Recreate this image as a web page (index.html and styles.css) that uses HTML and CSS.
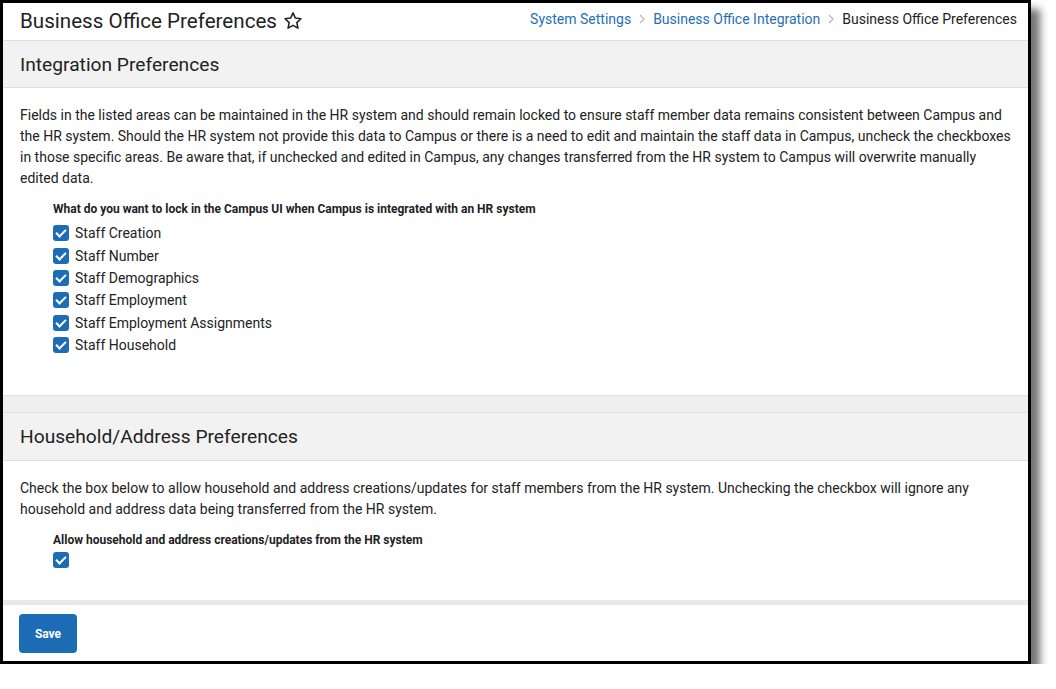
FILE: index.html
```html
<!DOCTYPE html>
<html>
  <head>
	<title>Business Office Preferences</title>
	<meta charset="UTF-8">
	<link rel="stylesheet" href="styles.css">
  </head>
  <body>
	<div class="frame">
		<div class="topbar">
			<h1 class="page-title">Business Office Preferences
				<svg class="star" viewBox="0 0 24 24" width="22" height="22"><path d="M12 3.2l2.6 5.6 6.1.7-4.5 4.2 1.2 6.1L12 16.8l-5.4 3 1.2-6.1-4.5-4.2 6.1-.7z" fill="none" stroke="#222" stroke-width="1.7" stroke-linejoin="round"/></svg>
			</h1>
			<div class="crumbs">
				<a href="#">System Settings</a>
				<svg class="sep" viewBox="0 0 8 12" width="8" height="12"><path d="M2 2l4 4-4 4" fill="none" stroke="#b8b8b8" stroke-width="1.3"/></svg>
				<a href="#">Business Office Integration</a>
				<svg class="sep" viewBox="0 0 8 12" width="8" height="12"><path d="M2 2l4 4-4 4" fill="none" stroke="#b8b8b8" stroke-width="1.3"/></svg>
				<span class="current">Business Office Preferences</span>
			</div>
		</div>

		<div class="main">
			<div class="card card-first">
				<div class="card-head">Integration Preferences</div>
				<div class="card-body">
					<p>Fields in the listed areas can be maintained in the HR system and should remain locked to ensure staff member data remains consistent between Campus and the HR system. Should the HR system not provide this data to Campus or there is a need to edit and maintain the staff data in Campus, uncheck the checkboxes in those specific areas. Be aware that, if unchecked and edited in Campus, any changes transferred from the HR system to Campus will overwrite manually edited data.</p>
					<div class="field">
						<div class="field-label">What do you want to lock in the Campus UI when Campus is integrated with an HR system</div>
						<label class="check"><span class="box"></span>Staff Creation</label>
						<label class="check"><span class="box"></span>Staff Number</label>
						<label class="check"><span class="box"></span>Staff Demographics</label>
						<label class="check"><span class="box"></span>Staff Employment</label>
						<label class="check"><span class="box"></span>Staff Employment Assignments</label>
						<label class="check"><span class="box"></span>Staff Household</label>
					</div>
				</div>
			</div>

			<div class="card card-second">
				<div class="card-head">Household/Address Preferences</div>
				<div class="card-body">
					<p>Check the box below to allow household and address creations/updates for staff members from the HR system. Unchecking the checkbox will ignore any household and address data being transferred from the HR system.</p>
					<div class="field">
						<div class="field-label">Allow household and address creations/updates from the HR system</div>
						<label class="check solo"><span class="box"></span></label>
					</div>
				</div>
			</div>
		</div>

		<div class="footer">
			<button class="btn">Save</button>
		</div>
	</div>
  </body>
</html>
```

FILE: styles.css
```css
html, body {
	margin: 0;
	padding: 0;
	background: #fff;
}

body {
	font-family: Roboto, "Liberation Sans", sans-serif;
	color: #222;
}

.frame {
	width: 1025px;
	height: 658px;
	border: 3px solid #000;
	background: #fff;
	box-shadow: 9px 9px 8px rgba(0, 0, 0, 0.55);
	display: flex;
	flex-direction: column;
	overflow: hidden;
}

.topbar {
	height: 37px;
	border-bottom: 1px solid #dedede;
	display: flex;
	align-items: center;
	justify-content: space-between;
	padding: 0 11px 0 17px;
	flex-shrink: 0;
}

.page-title {
	margin: 0;
	font-size: 20.6px;
	font-weight: 400;
	display: flex;
	align-items: center;
	gap: 5px;
	margin-top: -2px;
}

.star {
	display: block;
}

.crumbs {
	font-size: 14px;
	display: flex;
	align-items: center;
	gap: 7px;
	margin-top: -5px;
}

.crumbs a {
	color: #1f6fb6;
	text-decoration: none;
}

.crumbs .sep {
	display: block;
}

.crumbs .current {
	color: #222;
}

.main {
	flex: 1;
	min-height: 0;
	overflow: hidden;
	background: #efefef;
	display: flex;
	flex-direction: column;
	gap: 16px;
}

.card {
	background: #fff;
	border-bottom: 1px solid #e2e2e2;
	flex-shrink: 0;
}

.card-head {
	height: 47px;
	box-sizing: border-box;
	background: #f2f2f2;
	border-bottom: 1px solid #dedede;
	font-size: 19.2px;
	display: flex;
	align-items: center;
	padding: 0 17px;
}

.card-second .card-head {
	border-top: 1px solid #dedede;
	height: 49px;
}

.card-body {
	padding: 17px 10px 39px 17px;
	font-size: 14px;
}

.card-second .card-body {
	padding-bottom: 32px;
}

.card-body p {
	margin: 0;
	line-height: 21px;
}

.field {
	padding-left: 33px;
	margin-top: 12px;
}

.field-label {
	font-size: 12px;
	font-weight: 700;
	line-height: 16px;
	margin-bottom: 5px;
}

.check {
	display: flex;
	align-items: center;
	gap: 6px;
	height: 22.4px;
	font-size: 14px;
}

.box {
	width: 16px;
	height: 16px;
	border-radius: 3px;
	background: #1c6db5;
	position: relative;
	flex-shrink: 0;
}

.box::after {
	content: "";
	position: absolute;
	left: 5px;
	top: 2px;
	width: 4px;
	height: 8px;
	border: solid #fff;
	border-width: 0 2px 2px 0;
	transform: rotate(45deg);
}

.check.solo {
	margin-top: -5px;
}

.footer {
	height: 61px;
	flex-shrink: 0;
	padding: 9px 16px 8px;
	box-sizing: border-box;
	background: #fff;
	border-top: 5px solid #e9e9e9;
	margin-top: auto;
}

.btn {
	width: 58px;
	height: 39px;
	border: 0;
	border-radius: 4px;
	background: #1c6db5;
	color: #fff;
	font-family: Roboto, "Liberation Sans", sans-serif;
	font-weight: 700;
	font-size: 12px;
}
```
